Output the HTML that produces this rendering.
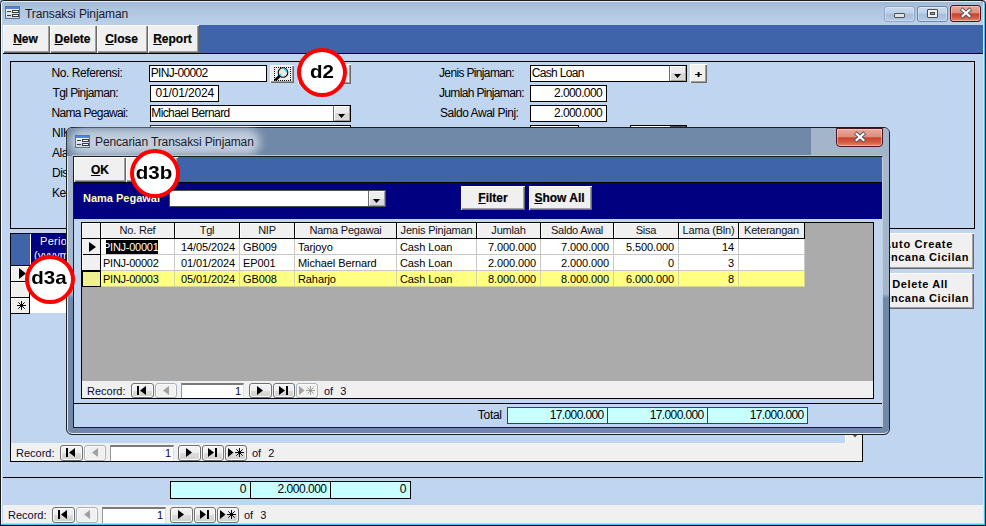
<!DOCTYPE html>
<html><head><meta charset="utf-8"><style>
html,body{margin:0;padding:0;width:986px;height:526px;overflow:hidden;position:relative;font-family:"Liberation Sans",sans-serif;}
body>div{position:absolute;}
.t{white-space:pre;font-family:"Liberation Sans",sans-serif;}
u{text-decoration:underline;}
</style></head><body>
<div style="left:0px;top:0px;width:986px;height:526px;background:#C0D6F0;"></div>
<div style="left:0px;top:0px;width:986px;height:25px;background:linear-gradient(#9DB6D3 0,#AFC6E0 40%,#BAD0E9 100%);border-radius:4px 5px 0 0;"></div>
<div style="left:3px;top:0px;width:980px;height:1px;background:#1c1c1c;"></div>
<div style="left:2px;top:1px;width:979px;height:1px;background:#E4EEF8;"></div>
<div style="left:0px;top:3px;width:1px;height:523px;background:#1c1c1c;"></div>
<svg style="position:absolute;left:0;top:0" width="5" height="5"><rect width="5" height="5" fill="#A3BCD8"/><path d="M0.5 5 V3.5 Q0.5 0.5 3.5 0.5 H5" stroke="#1c1c1c" fill="none"/><path d="M1.5 5 V3.8 Q1.5 1.5 3.8 1.5 H5" stroke="#E4EEF8" fill="none"/></svg>
<div style="left:1px;top:3px;width:1px;height:522px;background:#F4F8FC;"></div>
<div style="left:983px;top:2px;width:1px;height:522px;background:#DCE6F4;"></div>
<div style="left:984px;top:4px;width:1px;height:521px;background:#40C8F0;"></div>
<div style="left:985px;top:4px;width:1px;height:522px;background:#000;"></div>
<div style="left:1px;top:524px;width:984px;height:1px;background:#40C8F0;"></div>
<div style="left:0px;top:525px;width:986px;height:1px;background:#000;"></div>
<svg style="position:absolute;left:980px;top:0" width="6" height="6"><path d="M0 0.5 H2 Q5.5 0.5 5.5 4 V6" stroke="#1c1c1c" fill="none"/></svg>
<svg style="position:absolute;left:5px;top:6px" width="15" height="13" viewBox="0 0 15 13"><defs><linearGradient id="fg" x1="0" y1="0" x2="0" y2="1"><stop offset="0" stop-color="#FFFFFF"/><stop offset="1" stop-color="#C8D4E4"/></linearGradient></defs><rect x="0.5" y="0.5" width="14" height="12" fill="url(#fg)" stroke="#5E7490"/><rect x="1" y="1" width="13" height="2" fill="#4D86E0"/><rect x="2" y="5" width="4" height="1" fill="#404040"/><rect x="2" y="9" width="4" height="1" fill="#404040"/><rect x="7.5" y="4.5" width="6" height="2" fill="#FFFFFF" stroke="#3A3A3A"/><rect x="7.5" y="8.5" width="6" height="2" fill="#FFFFFF" stroke="#3A3A3A"/></svg>
<div class="t" style="left:25px;top:7px;font-size:12px;line-height:14px;color:#1A1A2A;letter-spacing:-0.1px;">Transaksi Pinjaman</div>
<div style="left:884px;top:6px;width:31px;height:16px;border:1px solid #8FA7C4;border-radius:3px;box-sizing:border-box;background:linear-gradient(#CBDBEE 0,#BCD0E8 45%,#A6BEDB 50%,#B4CBE6 100%);box-shadow:inset 0 0 0 1px rgba(255,255,255,0.35);"></div>
<div style="left:894px;top:13px;width:11px;height:5px;background:#E2E2E2;border:1px solid #505050;border-radius:1px;box-sizing:border-box;"></div>
<div style="left:917px;top:6px;width:31px;height:16px;border:1px solid #6F86A6;border-radius:3px;box-sizing:border-box;background:linear-gradient(#CBDBEE 0,#BCD0E8 45%,#A6BEDB 50%,#B4CBE6 100%);box-shadow:inset 0 0 0 1px rgba(255,255,255,0.35);"></div>
<div style="left:927px;top:9px;width:11px;height:9px;background:#F0F0F0;border:1px solid #4A4A4A;border-radius:1px;box-sizing:border-box;"></div>
<div style="left:930px;top:12px;width:5px;height:3px;background:#8FA8C8;border:1px solid #4A4A4A;box-sizing:border-box;"></div>
<div style="left:950px;top:5px;width:31px;height:17px;border:1px solid #4A1422;border-radius:3px;box-sizing:border-box;background:linear-gradient(#EBA89A 0,#DE8E7C 45%,#C9452C 52%,#D2583E 75%,#E08A70 100%);box-shadow:inset 0 0 0 1px rgba(255,220,210,0.5);"></div>
<svg style="position:absolute;left:958.5px;top:7.0px" width="14" height="12" viewBox="0 0 14 12"><path d="M3.6 3 L10.4 9 M10.4 3 L3.6 9" stroke="#505060" stroke-width="3.8" stroke-linecap="square"/><path d="M3.6 3 L10.4 9 M10.4 3 L3.6 9" stroke="#FFFFFF" stroke-width="2.2" stroke-linecap="square"/></svg>
<div style="left:199px;top:25px;width:784px;height:28px;background:#4064AA;"></div>
<div style="left:3px;top:53px;width:980px;height:1px;background:#000;"></div>
<div style="left:3px;top:25px;width:47px;height:28px;background:#F0F0F0;box-shadow: inset 1px 1px 0 #fff, inset -1px -1px 0 #696969, inset -2px -2px 0 #A0A0A0;"></div>
<div class="t" style="left:3px;width:45px;top:32px;text-align:center;font-size:12px;line-height:14px;font-weight:bold;color:#000;-webkit-text-stroke:0.2px #000;"><u>N</u>ew</div>
<div style="left:50px;top:25px;width:47px;height:28px;background:#F0F0F0;box-shadow: inset 1px 1px 0 #fff, inset -1px -1px 0 #696969, inset -2px -2px 0 #A0A0A0;"></div>
<div class="t" style="left:50px;width:45px;top:32px;text-align:center;font-size:12px;line-height:14px;font-weight:bold;color:#000;-webkit-text-stroke:0.2px #000;"><u>D</u>elete</div>
<div style="left:97px;top:25px;width:51px;height:28px;background:#F0F0F0;box-shadow: inset 1px 1px 0 #fff, inset -1px -1px 0 #696969, inset -2px -2px 0 #A0A0A0;"></div>
<div class="t" style="left:97px;width:49px;top:32px;text-align:center;font-size:12px;line-height:14px;font-weight:bold;color:#000;-webkit-text-stroke:0.2px #000;"><u>C</u>lose</div>
<div style="left:148px;top:25px;width:51px;height:28px;background:#F0F0F0;box-shadow: inset 1px 1px 0 #fff, inset -1px -1px 0 #696969, inset -2px -2px 0 #A0A0A0;"></div>
<div class="t" style="left:148px;width:49px;top:32px;text-align:center;font-size:12px;line-height:14px;font-weight:bold;color:#000;-webkit-text-stroke:0.2px #000;"><u>R</u>eport</div>
<div style="left:10px;top:61px;width:965px;height:168px;border:1px solid #000;box-sizing:border-box;"></div>
<div class="t" style="left:51.40px;top:66px;font-size:12px;line-height:14px;color:#000;letter-spacing:-0.408px;">No. Referensi:</div>
<div class="t" style="left:52.56px;top:86px;font-size:12px;line-height:14px;color:#000;letter-spacing:-0.605px;">Tgl Pinjaman:</div>
<div class="t" style="left:51.42px;top:106px;font-size:12px;line-height:14px;color:#000;letter-spacing:-0.653px;">Nama Pegawai:</div>
<div class="t" style="left:52px;top:126px;font-size:12px;line-height:14px;color:#000;letter-spacing:-0.5px;">NIK Pegawai:</div>
<div class="t" style="left:52px;top:146px;font-size:12px;line-height:14px;color:#000;letter-spacing:-0.5px;">Alamat:</div>
<div class="t" style="left:52px;top:166px;font-size:12px;line-height:14px;color:#000;letter-spacing:-0.5px;">Disetujui:</div>
<div class="t" style="left:52px;top:186px;font-size:12px;line-height:14px;color:#000;letter-spacing:-0.5px;">Ke  terangan:</div>
<div class="t" style="left:439.00px;top:66px;font-size:12px;line-height:14px;color:#000;letter-spacing:-0.649px;">Jenis Pinjaman:</div>
<div class="t" style="left:439.00px;top:86px;font-size:12px;line-height:14px;color:#000;letter-spacing:-0.657px;">Jumlah Pinjaman:</div>
<div class="t" style="left:440.00px;top:106px;font-size:12px;line-height:14px;color:#000;letter-spacing:-0.460px;">Saldo Awal Pinj:</div>
<div style="left:149px;top:65px;width:118px;height:17px;background:#fff;border:1px solid #000;box-sizing:border-box;"></div>
<div class="t" style="left:150.70px;top:66px;font-size:12px;line-height:14px;color:#000;letter-spacing:-0.656px;">PINJ-00002</div>
<div style="left:270px;top:65px;width:24px;height:18px;background:#F0F0F0;box-shadow: inset 1px 1px 0 #fff, inset -1px -1px 0 #696969, inset -2px -2px 0 #A0A0A0;"></div>
<div style="left:298px;top:64px;width:53px;height:20px;background:#F0F0F0;box-shadow: inset 1px 1px 0 #fff, inset -1px -1px 0 #696969, inset -2px -2px 0 #A0A0A0;"></div>
<div style="left:150px;top:85px;width:69px;height:17px;background:#fff;border:1px solid #000;box-sizing:border-box;"></div>
<div class="t" style="left:155.40px;top:86px;font-size:12px;line-height:14px;color:#000;letter-spacing:-0.144px;">01/01/2024</div>
<div style="left:150px;top:105px;width:201px;height:17px;background:#fff;border:1px solid #000;box-sizing:border-box;"></div>
<div class="t" style="left:151.26px;top:106px;font-size:12px;line-height:14px;color:#000;letter-spacing:-0.600px;">Michael Bernard</div>
<div style="left:333px;top:106px;width:1px;height:15px;background:#696969;"></div>
<div style="left:334px;top:106px;width:16px;height:15px;box-sizing:border-box;border-left:1px solid #fff;border-top:1px solid #fff;border-right:1px solid #A0A0A0;border-bottom:1px solid #A0A0A0;background:linear-gradient(#EDEDED 0,#EDEDED 50%,#D9D9D9 50%,#D9D9D9 100%);"></div>
<svg style="position:absolute;left:338px;top:114px" width="7" height="4" viewBox="0 0 7 4"><path d="M0 0 H7 L3.5 4 Z" fill="#000"/></svg>
<div style="left:150px;top:125px;width:201px;height:15px;background:#fff;border:1px solid #000;box-sizing:border-box;"></div>
<div style="left:530px;top:65px;width:157px;height:17px;background:#fff;border:1px solid #000;box-sizing:border-box;"></div>
<div class="t" style="left:531.66px;top:66px;font-size:12px;line-height:14px;color:#000;letter-spacing:-0.665px;">Cash Loan</div>
<div style="left:669px;top:66px;width:1px;height:15px;background:#696969;"></div>
<div style="left:670px;top:66px;width:16px;height:15px;box-sizing:border-box;border-left:1px solid #fff;border-top:1px solid #fff;border-right:1px solid #A0A0A0;border-bottom:1px solid #A0A0A0;background:linear-gradient(#EDEDED 0,#EDEDED 50%,#D9D9D9 50%,#D9D9D9 100%);"></div>
<svg style="position:absolute;left:674px;top:74px" width="7" height="4" viewBox="0 0 7 4"><path d="M0 0 H7 L3.5 4 Z" fill="#000"/></svg>
<div style="left:690px;top:64px;width:17px;height:19px;background:#F0F0F0;box-shadow: inset 1px 1px 0 #fff, inset -1px -1px 0 #696969, inset -2px -2px 0 #A0A0A0;"></div>
<svg style="position:absolute;left:694px;top:71px" width="9" height="7" viewBox="0 0 9 7"><rect x="3" y="1" width="1" height="5" fill="#E08A20"/><rect x="5" y="1" width="1" height="5" fill="#2080E0"/><rect x="4" y="1" width="1" height="5" fill="#101010"/><rect x="1" y="3" width="7" height="1" fill="#000"/></svg>
<div style="left:530px;top:85px;width:77px;height:17px;background:#fff;border:1px solid #000;box-sizing:border-box;"></div>
<div class="t" style="right:383.90px;top:86px;text-align:right;font-size:12px;line-height:14px;color:#000;letter-spacing:-0.600px;">2.000.000</div>
<div style="left:530px;top:105px;width:77px;height:17px;background:#fff;border:1px solid #000;box-sizing:border-box;"></div>
<div class="t" style="right:383.90px;top:106px;text-align:right;font-size:12px;line-height:14px;color:#000;letter-spacing:-0.600px;">2.000.000</div>
<div style="left:530px;top:125px;width:49px;height:15px;background:#fff;border:1px solid #000;box-sizing:border-box;"></div>
<div style="left:630px;top:125px;width:57px;height:15px;background:#fff;border:1px solid #000;box-sizing:border-box;"></div>
<div style="left:670px;top:126px;width:16px;height:1px;background:#505050;"></div>
<svg style="position:absolute;left:270px;top:65px" width="24" height="18" viewBox="0 0 24 18"><g fill="#000"><rect x="4" y="2" width="1" height="1"/><rect x="4" y="15" width="1" height="1"/><rect x="6" y="2" width="1" height="1"/><rect x="6" y="15" width="1" height="1"/><rect x="8" y="2" width="1" height="1"/><rect x="8" y="15" width="1" height="1"/><rect x="10" y="2" width="1" height="1"/><rect x="10" y="15" width="1" height="1"/><rect x="12" y="2" width="1" height="1"/><rect x="12" y="15" width="1" height="1"/><rect x="14" y="2" width="1" height="1"/><rect x="14" y="15" width="1" height="1"/><rect x="16" y="2" width="1" height="1"/><rect x="16" y="15" width="1" height="1"/><rect x="18" y="2" width="1" height="1"/><rect x="18" y="15" width="1" height="1"/><rect x="20" y="2" width="1" height="1"/><rect x="20" y="15" width="1" height="1"/><rect x="4" y="4" width="1" height="1"/><rect x="20" y="4" width="1" height="1"/><rect x="4" y="6" width="1" height="1"/><rect x="20" y="6" width="1" height="1"/><rect x="4" y="8" width="1" height="1"/><rect x="20" y="8" width="1" height="1"/><rect x="4" y="10" width="1" height="1"/><rect x="20" y="10" width="1" height="1"/><rect x="4" y="12" width="1" height="1"/><rect x="20" y="12" width="1" height="1"/><rect x="4" y="14" width="1" height="1"/><rect x="20" y="14" width="1" height="1"/></g><circle cx="13" cy="7.5" r="4.8" fill="#EFE6E6" stroke="#000" stroke-width="1.1"/><path d="M13.6 3.9 A3.6 3.6 0 0 1 16.6 7.2" stroke="#00E0F0" stroke-width="1.4" fill="none"/><path d="M9.6 8.6 A3.6 3.6 0 0 0 11.2 10.6" stroke="#00E0F0" stroke-width="1.4" fill="none"/><path d="M9.6 11 L5.2 15.2" stroke="#000" stroke-width="2.6"/></svg>
<div style="left:10px;top:233px;width:853px;height:229px;border:1px solid #000;box-sizing:border-box;"></div>
<div style="left:11px;top:234px;width:19px;height:31px;background:#4064AA;"></div>
<div style="left:30px;top:234px;width:1px;height:31px;background:#fff;"></div>
<div style="left:31px;top:234px;width:831px;height:31px;background:#000080;"></div>
<div class="t" style="left:40px;top:235px;font-size:11px;line-height:13px;color:#fff;letter-spacing:0.3px;">Periode</div>
<div class="t" style="left:34px;top:249px;font-size:11px;line-height:13px;color:#fff;">(yyyymm)</div>
<div style="left:30px;top:265px;width:170px;height:16px;background:#fff;"></div>
<div style="left:10px;top:265px;width:20px;height:17px;background:#F0F0F0;border:1px solid #000;box-sizing:border-box;box-shadow:inset 1px 1px 0 #fff;"></div>
<div style="left:30px;top:281px;width:170px;height:16px;background:#fff;"></div>
<div style="left:10px;top:281px;width:20px;height:17px;background:#F0F0F0;border:1px solid #000;box-sizing:border-box;box-shadow:inset 1px 1px 0 #fff;"></div>
<div style="left:30px;top:297px;width:170px;height:16px;background:#fff;"></div>
<div style="left:10px;top:297px;width:20px;height:17px;background:#F0F0F0;border:1px solid #000;box-sizing:border-box;box-shadow:inset 1px 1px 0 #fff;"></div>
<svg style="position:absolute;left:19px;top:268px" width="7" height="11" viewBox="0 0 7 11"><path d="M0 0 L7 5.5 L0 11 Z" fill="#000"/></svg>
<svg style="position:absolute;left:17px;top:301px" width="9" height="9" viewBox="0 0 9 9"><path d="M4.5 0 V9 M0 4.5 H9 M1.3 1.3 L7.7 7.7 M7.7 1.3 L1.3 7.7" stroke="#000" stroke-width="1"/><circle cx="4.5" cy="4.5" r="1.2"/></svg>
<div style="left:838px;top:233px;width:136px;height:36px;background:#F0F0F0;box-shadow: inset 1px 1px 0 #fff, inset -1px -1px 0 #696969, inset -2px -2px 0 #A0A0A0;"></div>
<div class="t" style="right:33.00px;top:238px;text-align:right;font-size:11px;line-height:13px;font-weight:bold;color:#000;letter-spacing:0.700px;">Auto Create</div>
<div class="t" style="right:17.00px;top:251px;text-align:right;font-size:11px;line-height:13px;font-weight:bold;color:#000;letter-spacing:0.550px;">Rencana Cicilan</div>
<div style="left:838px;top:273px;width:136px;height:36px;background:#F0F0F0;box-shadow: inset 1px 1px 0 #fff, inset -1px -1px 0 #696969, inset -2px -2px 0 #A0A0A0;"></div>
<div class="t" style="right:38.00px;top:278px;text-align:right;font-size:11px;line-height:13px;font-weight:bold;color:#000;letter-spacing:0.600px;">Delete All</div>
<div class="t" style="right:17.00px;top:292px;text-align:right;font-size:11px;line-height:13px;font-weight:bold;color:#000;letter-spacing:0.550px;">Rencana Cicilan</div>
<div style="left:845px;top:434px;width:17px;height:9px;background:#F0F0F0;box-shadow:inset 1px 1px 0 #fff;"></div>
<svg style="position:absolute;left:852px;top:434px" width="6" height="4" viewBox="0 0 6 4"><path d="M0 0 H6 L3 3.5 Z" fill="#505050"/></svg>
<div style="left:11px;top:443px;width:851px;height:18px;background:#F0F0F0;"></div>
<div class="t" style="left:16px;top:447px;font-size:11px;line-height:13px;color:#0A0A30;">Record:</div>
<div style="left:60px;top:445px;width:23px;height:16px;box-sizing:border-box;border:1px solid #707070;border-radius:3px;background:linear-gradient(#F4F4F4 0,#EDEDED 50%,#DCDCDC 52%,#D0D0D0 100%);box-shadow:inset 0 0 0 1px #FCFCFC;"></div>
<svg style="position:absolute;left:66px;top:448px" width="10" height="9" viewBox="0 0 10 9"><rect x="0" y="0" width="2" height="9" fill="#000"/><path d="M9 0 L3 4.5 L9 9 Z" fill="#000"/></svg>
<div style="left:84px;top:445px;width:22px;height:16px;box-sizing:border-box;border:1px solid #A9B1B9;border-radius:3px;background:#F0F0F0;box-shadow:inset 0 0 0 1px #FAFAFA;"></div>
<svg style="position:absolute;left:92px;top:448px" width="6" height="9" viewBox="0 0 6 9"><path d="M6 0 L0 4.5 L6 9 Z" fill="#A0A0A0"/></svg>
<div style="left:110px;top:445px;width:64px;height:16px;background:#fff;border-top:2px solid #7A7A7A;border-left:1px solid #9A9A9A;border-right:1px solid #E0E0E0;box-sizing:border-box;"></div>
<div class="t" style="right:815px;top:447px;text-align:right;font-size:11px;line-height:13px;color:#0A0A30;">1</div>
<div style="left:178px;top:445px;width:23px;height:16px;box-sizing:border-box;border:1px solid #707070;border-radius:3px;background:linear-gradient(#F4F4F4 0,#EDEDED 50%,#DCDCDC 52%,#D0D0D0 100%);box-shadow:inset 0 0 0 1px #FCFCFC;"></div>
<svg style="position:absolute;left:186px;top:448px" width="6" height="9" viewBox="0 0 6 9"><path d="M0 0 L6 4.5 L0 9 Z" fill="#000"/></svg>
<div style="left:202px;top:445px;width:22px;height:16px;box-sizing:border-box;border:1px solid #707070;border-radius:3px;background:linear-gradient(#F4F4F4 0,#EDEDED 50%,#DCDCDC 52%,#D0D0D0 100%);box-shadow:inset 0 0 0 1px #FCFCFC;"></div>
<svg style="position:absolute;left:208px;top:448px" width="10" height="9" viewBox="0 0 10 9"><path d="M0 0 L6 4.5 L0 9 Z" fill="#000"/><rect x="7" y="0" width="2" height="9" fill="#000"/></svg>
<div style="left:225px;top:445px;width:22px;height:16px;box-sizing:border-box;border:1px solid #707070;border-radius:3px;background:linear-gradient(#F4F4F4 0,#EDEDED 50%,#DCDCDC 52%,#D0D0D0 100%);box-shadow:inset 0 0 0 1px #FCFCFC;"></div>
<svg style="position:absolute;left:228px;top:448px" width="17" height="9" viewBox="0 0 17 9"><path d="M0 0 L5.5 4.5 L0 9 Z" fill="#000"/><path d="M11.5 0 V9 M7 4.5 H16 M8.3 1.3 L14.7 7.7 M14.7 1.3 L8.3 7.7" stroke="#000" stroke-width="1"/><circle cx="11.5" cy="4.5" r="1.3" fill="#000"/></svg>
<div class="t" style="left:252px;top:447px;font-size:11px;line-height:13px;color:#0A0A30;word-spacing:0.5px;">of&nbsp; 2</div>
<div style="left:3px;top:477px;width:980px;height:1px;background:#000;"></div>
<div style="left:170px;top:481px;width:81px;height:18px;background:#C8FFFF;border:1px solid #000;box-sizing:border-box;"></div>
<div class="t" style="right:738.25px;top:482px;text-align:right;font-size:12px;line-height:14px;color:#000;letter-spacing:1.300px;">0</div>
<div style="left:250px;top:481px;width:81px;height:18px;background:#C8FFFF;border:1px solid #000;box-sizing:border-box;"></div>
<div class="t" style="right:659.50px;top:482px;text-align:right;font-size:12px;line-height:14px;color:#000;letter-spacing:-0.500px;">2.000.000</div>
<div style="left:330px;top:481px;width:81px;height:18px;background:#C8FFFF;border:1px solid #000;box-sizing:border-box;"></div>
<div class="t" style="right:578.25px;top:482px;text-align:right;font-size:12px;line-height:14px;color:#000;letter-spacing:1.300px;">0</div>
<div style="left:3px;top:505px;width:980px;height:18px;background:#F0F0F0;"></div>
<div class="t" style="left:8px;top:509px;font-size:11px;line-height:13px;color:#0A0A30;">Record:</div>
<div style="left:52px;top:507px;width:23px;height:16px;box-sizing:border-box;border:1px solid #707070;border-radius:3px;background:linear-gradient(#F4F4F4 0,#EDEDED 50%,#DCDCDC 52%,#D0D0D0 100%);box-shadow:inset 0 0 0 1px #FCFCFC;"></div>
<svg style="position:absolute;left:58px;top:510px" width="10" height="9" viewBox="0 0 10 9"><rect x="0" y="0" width="2" height="9" fill="#000"/><path d="M9 0 L3 4.5 L9 9 Z" fill="#000"/></svg>
<div style="left:76px;top:507px;width:22px;height:16px;box-sizing:border-box;border:1px solid #A9B1B9;border-radius:3px;background:#F0F0F0;box-shadow:inset 0 0 0 1px #FAFAFA;"></div>
<svg style="position:absolute;left:84px;top:510px" width="6" height="9" viewBox="0 0 6 9"><path d="M6 0 L0 4.5 L6 9 Z" fill="#A0A0A0"/></svg>
<div style="left:102px;top:507px;width:64px;height:16px;background:#fff;border-top:2px solid #7A7A7A;border-left:1px solid #9A9A9A;border-right:1px solid #E0E0E0;box-sizing:border-box;"></div>
<div class="t" style="right:823px;top:509px;text-align:right;font-size:11px;line-height:13px;color:#0A0A30;">1</div>
<div style="left:170px;top:507px;width:23px;height:16px;box-sizing:border-box;border:1px solid #707070;border-radius:3px;background:linear-gradient(#F4F4F4 0,#EDEDED 50%,#DCDCDC 52%,#D0D0D0 100%);box-shadow:inset 0 0 0 1px #FCFCFC;"></div>
<svg style="position:absolute;left:178px;top:510px" width="6" height="9" viewBox="0 0 6 9"><path d="M0 0 L6 4.5 L0 9 Z" fill="#000"/></svg>
<div style="left:194px;top:507px;width:22px;height:16px;box-sizing:border-box;border:1px solid #707070;border-radius:3px;background:linear-gradient(#F4F4F4 0,#EDEDED 50%,#DCDCDC 52%,#D0D0D0 100%);box-shadow:inset 0 0 0 1px #FCFCFC;"></div>
<svg style="position:absolute;left:200px;top:510px" width="10" height="9" viewBox="0 0 10 9"><path d="M0 0 L6 4.5 L0 9 Z" fill="#000"/><rect x="7" y="0" width="2" height="9" fill="#000"/></svg>
<div style="left:217px;top:507px;width:22px;height:16px;box-sizing:border-box;border:1px solid #707070;border-radius:3px;background:linear-gradient(#F4F4F4 0,#EDEDED 50%,#DCDCDC 52%,#D0D0D0 100%);box-shadow:inset 0 0 0 1px #FCFCFC;"></div>
<svg style="position:absolute;left:220px;top:510px" width="17" height="9" viewBox="0 0 17 9"><path d="M0 0 L5.5 4.5 L0 9 Z" fill="#000"/><path d="M11.5 0 V9 M7 4.5 H16 M8.3 1.3 L14.7 7.7 M14.7 1.3 L8.3 7.7" stroke="#000" stroke-width="1"/><circle cx="11.5" cy="4.5" r="1.3" fill="#000"/></svg>
<div class="t" style="left:244px;top:509px;font-size:11px;line-height:13px;color:#0A0A30;word-spacing:0.5px;">of&nbsp; 3</div>
<div style="left:66px;top:127px;width:824px;height:308px;border:1px solid #1E1E1E;border-radius:6px;box-sizing:border-box;background:linear-gradient(#A8B9CD 0,#A3B5CB 166px,#7189A8 170px,#7189A8 100%);box-shadow: inset 1px 1px 0 #E0E8F0, inset 0 -1px 0 #E0E8F0;"></div>
<div style="left:67px;top:128px;width:822px;height:28px;background:linear-gradient(90deg,#7189A8 0,#7189A8 744px,#A3B5CB 744px);border-radius:5px 5px 0 0;"></div>
<div style="left:70px;top:129px;width:190px;height:26px;border-radius:13px;background:rgba(200,212,226,0.92);filter:blur(4px);"></div>
<div style="left:72px;top:155px;width:811px;height:1px;background:#B8C6D6;"></div>
<svg style="position:absolute;left:75px;top:135px" width="15" height="13" viewBox="0 0 15 13"><defs><linearGradient id="fg" x1="0" y1="0" x2="0" y2="1"><stop offset="0" stop-color="#FFFFFF"/><stop offset="1" stop-color="#C8D4E4"/></linearGradient></defs><rect x="0.5" y="0.5" width="14" height="12" fill="url(#fg)" stroke="#5E7490"/><rect x="1" y="1" width="13" height="2" fill="#4D86E0"/><rect x="2" y="5" width="4" height="1" fill="#404040"/><rect x="2" y="9" width="4" height="1" fill="#404040"/><rect x="7.5" y="4.5" width="6" height="2" fill="#FFFFFF" stroke="#3A3A3A"/><rect x="7.5" y="8.5" width="6" height="2" fill="#FFFFFF" stroke="#3A3A3A"/></svg>
<div class="t" style="left:95px;top:135px;font-size:12px;line-height:14px;color:#1A1A2A;letter-spacing:-0.12px;">Pencarian Transaksi Pinjaman</div>
<div style="left:836px;top:128px;width:47px;height:19px;border:1px solid #4A1422;border-radius:0 0 4px 4px;box-sizing:border-box;background:linear-gradient(#EBA89A 0,#DE8E7C 45%,#C9452C 52%,#D2583E 75%,#E08A70 100%);box-shadow:inset 0 0 0 1px rgba(255,220,210,0.5);"></div>
<svg style="position:absolute;left:852.5px;top:131.0px" width="14" height="12" viewBox="0 0 14 12"><path d="M3.6 3 L10.4 9 M10.4 3 L3.6 9" stroke="#505060" stroke-width="3.8" stroke-linecap="square"/><path d="M3.6 3 L10.4 9 M10.4 3 L3.6 9" stroke="#FFFFFF" stroke-width="2.2" stroke-linecap="square"/></svg>
<div style="left:73px;top:156px;width:810px;height:272px;border:1px solid #1E1E1E;border-right-color:#C4D0DE;box-sizing:border-box;background:#C0D6F0;"></div>
<div style="left:178px;top:157px;width:704px;height:25px;background:#4064AA;"></div>
<div style="left:74px;top:157px;width:52px;height:25px;background:#F0F0F0;box-shadow: inset 1px 1px 0 #fff, inset -1px -1px 0 #696969, inset -2px -2px 0 #A0A0A0;"></div>
<div class="t" style="left:75px;width:50px;top:163px;text-align:center;font-size:12px;line-height:14px;font-weight:bold;-webkit-text-stroke:0.2px #000;"><u>O</u>K</div>
<div style="left:126px;top:157px;width:52px;height:25px;background:#F0F0F0;box-shadow: inset 1px 1px 0 #fff, inset -1px -1px 0 #696969, inset -2px -2px 0 #A0A0A0;"></div>
<div style="left:74px;top:182px;width:808px;height:1px;background:#000;"></div>
<div style="left:74px;top:183px;width:808px;height:36px;background:#000080;"></div>
<div class="t" style="left:83px;top:192px;font-size:11px;line-height:13px;font-weight:bold;color:#FFFFC0;">Nama Pegawai</div>
<div style="left:169px;top:190px;width:217px;height:17px;background:#fff;border:1px solid #505050;box-sizing:border-box;"></div>
<div style="left:368px;top:191px;width:1px;height:15px;background:#696969;"></div>
<div style="left:369px;top:191px;width:16px;height:15px;box-sizing:border-box;border-left:1px solid #fff;border-top:1px solid #fff;border-right:1px solid #A0A0A0;border-bottom:1px solid #A0A0A0;background:linear-gradient(#EDEDED 0,#EDEDED 50%,#D9D9D9 50%,#D9D9D9 100%);"></div>
<svg style="position:absolute;left:373px;top:199px" width="7" height="4" viewBox="0 0 7 4"><path d="M0 0 H7 L3.5 4 Z" fill="#000"/></svg>
<div style="left:461px;top:186px;width:64px;height:24px;background:#F0F0F0;box-shadow: inset 1px 1px 0 #fff, inset -1px -1px 0 #696969, inset -2px -2px 0 #A0A0A0;"></div>
<div class="t" style="left:462px;width:62px;top:191px;text-align:center;font-size:12px;line-height:14px;font-weight:bold;-webkit-text-stroke:0.2px #000;"><u>F</u>ilter</div>
<div style="left:529px;top:186px;width:63px;height:24px;background:#F0F0F0;box-shadow: inset 1px 1px 0 #fff, inset -1px -1px 0 #696969, inset -2px -2px 0 #A0A0A0;"></div>
<div class="t" style="left:529px;width:61px;top:191px;text-align:center;font-size:12px;line-height:14px;font-weight:bold;-webkit-text-stroke:0.2px #000;"><u>S</u>how All</div>
<div style="left:81px;top:222px;width:793px;height:177px;border:1px solid #000;box-sizing:border-box;background:#ABABAB;"></div>
<div style="left:82px;top:223px;width:723px;height:16px;background:#F0F0F0;"></div>
<div style="left:82px;top:223px;width:18px;height:1px;background:#fff;"></div>
<div style="left:82px;top:223px;width:1px;height:15px;background:#fff;"></div>
<div style="left:100px;top:223px;width:1px;height:16px;background:#000;"></div>
<div style="left:101px;top:223px;width:73px;height:1px;background:#fff;"></div>
<div style="left:101px;top:223px;width:1px;height:15px;background:#fff;"></div>
<div style="left:174px;top:223px;width:1px;height:16px;background:#000;"></div>
<div class="t" style="left:101px;width:73px;top:224px;text-align:center;font-size:11px;line-height:13px;color:#101020;letter-spacing:-0.2px;">No. Ref</div>
<div style="left:175px;top:223px;width:64px;height:1px;background:#fff;"></div>
<div style="left:175px;top:223px;width:1px;height:15px;background:#fff;"></div>
<div style="left:239px;top:223px;width:1px;height:16px;background:#000;"></div>
<div class="t" style="left:175px;width:64px;top:224px;text-align:center;font-size:11px;line-height:13px;color:#101020;letter-spacing:-0.2px;">Tgl</div>
<div style="left:240px;top:223px;width:54px;height:1px;background:#fff;"></div>
<div style="left:240px;top:223px;width:1px;height:15px;background:#fff;"></div>
<div style="left:294px;top:223px;width:1px;height:16px;background:#000;"></div>
<div class="t" style="left:240px;width:54px;top:224px;text-align:center;font-size:11px;line-height:13px;color:#101020;letter-spacing:-0.2px;">NIP</div>
<div style="left:295px;top:223px;width:101px;height:1px;background:#fff;"></div>
<div style="left:295px;top:223px;width:1px;height:15px;background:#fff;"></div>
<div style="left:396px;top:223px;width:1px;height:16px;background:#000;"></div>
<div class="t" style="left:295px;width:101px;top:224px;text-align:center;font-size:11px;line-height:13px;color:#101020;letter-spacing:-0.2px;">Nama Pegawai</div>
<div style="left:397px;top:223px;width:79px;height:1px;background:#fff;"></div>
<div style="left:397px;top:223px;width:1px;height:15px;background:#fff;"></div>
<div style="left:476px;top:223px;width:1px;height:16px;background:#000;"></div>
<div class="t" style="left:397px;width:79px;top:224px;text-align:center;font-size:11px;line-height:13px;color:#101020;letter-spacing:-0.2px;">Jenis Pinjaman</div>
<div style="left:477px;top:223px;width:63px;height:1px;background:#fff;"></div>
<div style="left:477px;top:223px;width:1px;height:15px;background:#fff;"></div>
<div style="left:540px;top:223px;width:1px;height:16px;background:#000;"></div>
<div class="t" style="left:477px;width:63px;top:224px;text-align:center;font-size:11px;line-height:13px;color:#101020;letter-spacing:-0.2px;">Jumlah</div>
<div style="left:541px;top:223px;width:72px;height:1px;background:#fff;"></div>
<div style="left:541px;top:223px;width:1px;height:15px;background:#fff;"></div>
<div style="left:613px;top:223px;width:1px;height:16px;background:#000;"></div>
<div class="t" style="left:541px;width:72px;top:224px;text-align:center;font-size:11px;line-height:13px;color:#101020;letter-spacing:-0.2px;">Saldo Awal</div>
<div style="left:614px;top:223px;width:64px;height:1px;background:#fff;"></div>
<div style="left:614px;top:223px;width:1px;height:15px;background:#fff;"></div>
<div style="left:678px;top:223px;width:1px;height:16px;background:#000;"></div>
<div class="t" style="left:614px;width:64px;top:224px;text-align:center;font-size:11px;line-height:13px;color:#101020;letter-spacing:-0.2px;">Sisa</div>
<div style="left:679px;top:223px;width:59px;height:1px;background:#fff;"></div>
<div style="left:679px;top:223px;width:1px;height:15px;background:#fff;"></div>
<div style="left:738px;top:223px;width:1px;height:16px;background:#000;"></div>
<div class="t" style="left:679px;width:59px;top:224px;text-align:center;font-size:11px;line-height:13px;color:#101020;letter-spacing:-0.2px;">Lama (Bln)</div>
<div style="left:739px;top:223px;width:65px;height:1px;background:#fff;"></div>
<div style="left:739px;top:223px;width:1px;height:15px;background:#fff;"></div>
<div style="left:804px;top:223px;width:1px;height:16px;background:#000;"></div>
<div class="t" style="left:739px;width:65px;top:224px;text-align:center;font-size:11px;line-height:13px;color:#101020;letter-spacing:-0.2px;">Keterangan</div>
<div style="left:82px;top:238px;width:723px;height:1px;background:#000;"></div>
<div style="left:82px;top:239px;width:723px;height:16px;background:#fff;"></div>
<div style="left:82px;top:239px;width:19px;height:16px;background:#F0F0F0;box-shadow: inset 1px 0 0 #fff, inset -1px -1px 0 #000;"></div>
<div style="left:174px;top:239px;width:1px;height:16px;background:#C8C8C8;"></div>
<div style="left:101px;top:254px;width:73px;height:1px;background:#C8C8C8;"></div>
<div style="left:106px;top:240px;width:52px;height:14px;background:#000;"></div>
<div class="t" style="left:103px;top:241px;font-size:11px;line-height:13px;color:#000;letter-spacing:-0.1px;color:#fff;letter-spacing:-0.25px;">PINJ-00001</div>
<div style="left:239px;top:239px;width:1px;height:16px;background:#C8C8C8;"></div>
<div style="left:175px;top:254px;width:64px;height:1px;background:#C8C8C8;"></div>
<div class="t" style="right:751px;top:241px;text-align:right;font-size:11px;line-height:13px;color:#000;letter-spacing:-0.1px;">14/05/2024</div>
<div style="left:294px;top:239px;width:1px;height:16px;background:#C8C8C8;"></div>
<div style="left:240px;top:254px;width:54px;height:1px;background:#C8C8C8;"></div>
<div class="t" style="left:243px;top:241px;font-size:11px;line-height:13px;color:#000;letter-spacing:-0.1px;">GB009</div>
<div style="left:396px;top:239px;width:1px;height:16px;background:#C8C8C8;"></div>
<div style="left:295px;top:254px;width:101px;height:1px;background:#C8C8C8;"></div>
<div class="t" style="left:298px;top:241px;font-size:11px;line-height:13px;color:#000;letter-spacing:-0.1px;">Tarjoyo</div>
<div style="left:476px;top:239px;width:1px;height:16px;background:#C8C8C8;"></div>
<div style="left:397px;top:254px;width:79px;height:1px;background:#C8C8C8;"></div>
<div class="t" style="left:400px;top:241px;font-size:11px;line-height:13px;color:#000;letter-spacing:-0.1px;">Cash Loan</div>
<div style="left:540px;top:239px;width:1px;height:16px;background:#C8C8C8;"></div>
<div style="left:477px;top:254px;width:63px;height:1px;background:#C8C8C8;"></div>
<div class="t" style="right:450px;top:241px;text-align:right;font-size:11px;line-height:13px;color:#000;letter-spacing:-0.1px;">7.000.000</div>
<div style="left:613px;top:239px;width:1px;height:16px;background:#C8C8C8;"></div>
<div style="left:541px;top:254px;width:72px;height:1px;background:#C8C8C8;"></div>
<div class="t" style="right:377px;top:241px;text-align:right;font-size:11px;line-height:13px;color:#000;letter-spacing:-0.1px;">7.000.000</div>
<div style="left:678px;top:239px;width:1px;height:16px;background:#C8C8C8;"></div>
<div style="left:614px;top:254px;width:64px;height:1px;background:#C8C8C8;"></div>
<div class="t" style="right:312px;top:241px;text-align:right;font-size:11px;line-height:13px;color:#000;letter-spacing:-0.1px;">5.500.000</div>
<div style="left:738px;top:239px;width:1px;height:16px;background:#C8C8C8;"></div>
<div style="left:679px;top:254px;width:59px;height:1px;background:#C8C8C8;"></div>
<div class="t" style="right:252px;top:241px;text-align:right;font-size:11px;line-height:13px;color:#000;letter-spacing:-0.1px;">14</div>
<div style="left:804px;top:239px;width:1px;height:16px;background:#C8C8C8;"></div>
<div style="left:739px;top:254px;width:65px;height:1px;background:#C8C8C8;"></div>
<div style="left:82px;top:255px;width:723px;height:16px;background:#fff;"></div>
<div style="left:82px;top:255px;width:19px;height:16px;background:#F0F0F0;box-shadow: inset 1px 0 0 #fff, inset -1px -1px 0 #000;"></div>
<div style="left:174px;top:255px;width:1px;height:16px;background:#C8C8C8;"></div>
<div style="left:101px;top:270px;width:73px;height:1px;background:#C8C8C8;"></div>
<div class="t" style="left:103px;top:257px;font-size:11px;line-height:13px;color:#000;letter-spacing:-0.1px;letter-spacing:-0.25px;">PINJ-00002</div>
<div style="left:239px;top:255px;width:1px;height:16px;background:#C8C8C8;"></div>
<div style="left:175px;top:270px;width:64px;height:1px;background:#C8C8C8;"></div>
<div class="t" style="right:751px;top:257px;text-align:right;font-size:11px;line-height:13px;color:#000;letter-spacing:-0.1px;">01/01/2024</div>
<div style="left:294px;top:255px;width:1px;height:16px;background:#C8C8C8;"></div>
<div style="left:240px;top:270px;width:54px;height:1px;background:#C8C8C8;"></div>
<div class="t" style="left:243px;top:257px;font-size:11px;line-height:13px;color:#000;letter-spacing:-0.1px;">EP001</div>
<div style="left:396px;top:255px;width:1px;height:16px;background:#C8C8C8;"></div>
<div style="left:295px;top:270px;width:101px;height:1px;background:#C8C8C8;"></div>
<div class="t" style="left:298px;top:257px;font-size:11px;line-height:13px;color:#000;letter-spacing:-0.1px;">Michael Bernard</div>
<div style="left:476px;top:255px;width:1px;height:16px;background:#C8C8C8;"></div>
<div style="left:397px;top:270px;width:79px;height:1px;background:#C8C8C8;"></div>
<div class="t" style="left:400px;top:257px;font-size:11px;line-height:13px;color:#000;letter-spacing:-0.1px;">Cash Loan</div>
<div style="left:540px;top:255px;width:1px;height:16px;background:#C8C8C8;"></div>
<div style="left:477px;top:270px;width:63px;height:1px;background:#C8C8C8;"></div>
<div class="t" style="right:450px;top:257px;text-align:right;font-size:11px;line-height:13px;color:#000;letter-spacing:-0.1px;">2.000.000</div>
<div style="left:613px;top:255px;width:1px;height:16px;background:#C8C8C8;"></div>
<div style="left:541px;top:270px;width:72px;height:1px;background:#C8C8C8;"></div>
<div class="t" style="right:377px;top:257px;text-align:right;font-size:11px;line-height:13px;color:#000;letter-spacing:-0.1px;">2.000.000</div>
<div style="left:678px;top:255px;width:1px;height:16px;background:#C8C8C8;"></div>
<div style="left:614px;top:270px;width:64px;height:1px;background:#C8C8C8;"></div>
<div class="t" style="right:312px;top:257px;text-align:right;font-size:11px;line-height:13px;color:#000;letter-spacing:-0.1px;">0</div>
<div style="left:738px;top:255px;width:1px;height:16px;background:#C8C8C8;"></div>
<div style="left:679px;top:270px;width:59px;height:1px;background:#C8C8C8;"></div>
<div class="t" style="right:252px;top:257px;text-align:right;font-size:11px;line-height:13px;color:#000;letter-spacing:-0.1px;">3</div>
<div style="left:804px;top:255px;width:1px;height:16px;background:#C8C8C8;"></div>
<div style="left:739px;top:270px;width:65px;height:1px;background:#C8C8C8;"></div>
<div style="left:82px;top:271px;width:723px;height:16px;background:#FFFF80;"></div>
<div style="left:82px;top:271px;width:19px;height:16px;background:#F0F090;box-shadow: inset 0 0 0 1px #000;"></div>
<div style="left:81px;top:270px;width:20px;height:17px;border:1px solid #000;box-sizing:border-box;"></div>
<div style="left:174px;top:271px;width:1px;height:16px;background:#D4D4A0;"></div>
<div style="left:101px;top:286px;width:73px;height:1px;background:#D4D4A0;"></div>
<div class="t" style="left:103px;top:273px;font-size:11px;line-height:13px;color:#000;letter-spacing:-0.1px;letter-spacing:-0.25px;">PINJ-00003</div>
<div style="left:239px;top:271px;width:1px;height:16px;background:#D4D4A0;"></div>
<div style="left:175px;top:286px;width:64px;height:1px;background:#D4D4A0;"></div>
<div class="t" style="right:751px;top:273px;text-align:right;font-size:11px;line-height:13px;color:#000;letter-spacing:-0.1px;">05/01/2024</div>
<div style="left:294px;top:271px;width:1px;height:16px;background:#D4D4A0;"></div>
<div style="left:240px;top:286px;width:54px;height:1px;background:#D4D4A0;"></div>
<div class="t" style="left:243px;top:273px;font-size:11px;line-height:13px;color:#000;letter-spacing:-0.1px;">GB008</div>
<div style="left:396px;top:271px;width:1px;height:16px;background:#D4D4A0;"></div>
<div style="left:295px;top:286px;width:101px;height:1px;background:#D4D4A0;"></div>
<div class="t" style="left:298px;top:273px;font-size:11px;line-height:13px;color:#000;letter-spacing:-0.1px;">Raharjo</div>
<div style="left:476px;top:271px;width:1px;height:16px;background:#D4D4A0;"></div>
<div style="left:397px;top:286px;width:79px;height:1px;background:#D4D4A0;"></div>
<div class="t" style="left:400px;top:273px;font-size:11px;line-height:13px;color:#000;letter-spacing:-0.1px;">Cash Loan</div>
<div style="left:540px;top:271px;width:1px;height:16px;background:#D4D4A0;"></div>
<div style="left:477px;top:286px;width:63px;height:1px;background:#D4D4A0;"></div>
<div class="t" style="right:450px;top:273px;text-align:right;font-size:11px;line-height:13px;color:#000;letter-spacing:-0.1px;">8.000.000</div>
<div style="left:613px;top:271px;width:1px;height:16px;background:#D4D4A0;"></div>
<div style="left:541px;top:286px;width:72px;height:1px;background:#D4D4A0;"></div>
<div class="t" style="right:377px;top:273px;text-align:right;font-size:11px;line-height:13px;color:#000;letter-spacing:-0.1px;">8.000.000</div>
<div style="left:678px;top:271px;width:1px;height:16px;background:#D4D4A0;"></div>
<div style="left:614px;top:286px;width:64px;height:1px;background:#D4D4A0;"></div>
<div class="t" style="right:312px;top:273px;text-align:right;font-size:11px;line-height:13px;color:#000;letter-spacing:-0.1px;">6.000.000</div>
<div style="left:738px;top:271px;width:1px;height:16px;background:#D4D4A0;"></div>
<div style="left:679px;top:286px;width:59px;height:1px;background:#D4D4A0;"></div>
<div class="t" style="right:252px;top:273px;text-align:right;font-size:11px;line-height:13px;color:#000;letter-spacing:-0.1px;">8</div>
<div style="left:804px;top:271px;width:1px;height:16px;background:#D4D4A0;"></div>
<div style="left:739px;top:286px;width:65px;height:1px;background:#D4D4A0;"></div>
<svg style="position:absolute;left:89px;top:242px" width="7" height="10" viewBox="0 0 7 10"><path d="M0 0 L7 5 L0 10 Z" fill="#000"/></svg>
<div style="left:82px;top:381px;width:791px;height:17px;background:#F0F0F0;"></div>
<div class="t" style="left:87px;top:385px;font-size:11px;line-height:13px;color:#0A0A30;">Record:</div>
<div style="left:131px;top:383px;width:23px;height:15px;box-sizing:border-box;border:1px solid #707070;border-radius:3px;background:linear-gradient(#F4F4F4 0,#EDEDED 50%,#DCDCDC 52%,#D0D0D0 100%);box-shadow:inset 0 0 0 1px #FCFCFC;"></div>
<svg style="position:absolute;left:137px;top:386px" width="10" height="9" viewBox="0 0 10 9"><rect x="0" y="0" width="2" height="9" fill="#000"/><path d="M9 0 L3 4.5 L9 9 Z" fill="#000"/></svg>
<div style="left:155px;top:383px;width:22px;height:15px;box-sizing:border-box;border:1px solid #A9B1B9;border-radius:3px;background:#F0F0F0;box-shadow:inset 0 0 0 1px #FAFAFA;"></div>
<svg style="position:absolute;left:163px;top:386px" width="6" height="9" viewBox="0 0 6 9"><path d="M6 0 L0 4.5 L6 9 Z" fill="#A0A0A0"/></svg>
<div style="left:181px;top:383px;width:63px;height:15px;background:#fff;border-top:2px solid #7A7A7A;border-left:1px solid #9A9A9A;border-right:1px solid #E0E0E0;box-sizing:border-box;"></div>
<div class="t" style="right:745px;top:385px;text-align:right;font-size:11px;line-height:13px;color:#0A0A30;">1</div>
<div style="left:249px;top:383px;width:23px;height:15px;box-sizing:border-box;border:1px solid #707070;border-radius:3px;background:linear-gradient(#F4F4F4 0,#EDEDED 50%,#DCDCDC 52%,#D0D0D0 100%);box-shadow:inset 0 0 0 1px #FCFCFC;"></div>
<svg style="position:absolute;left:257px;top:386px" width="6" height="9" viewBox="0 0 6 9"><path d="M0 0 L6 4.5 L0 9 Z" fill="#000"/></svg>
<div style="left:273px;top:383px;width:22px;height:15px;box-sizing:border-box;border:1px solid #707070;border-radius:3px;background:linear-gradient(#F4F4F4 0,#EDEDED 50%,#DCDCDC 52%,#D0D0D0 100%);box-shadow:inset 0 0 0 1px #FCFCFC;"></div>
<svg style="position:absolute;left:279px;top:386px" width="10" height="9" viewBox="0 0 10 9"><path d="M0 0 L6 4.5 L0 9 Z" fill="#000"/><rect x="7" y="0" width="2" height="9" fill="#000"/></svg>
<div style="left:296px;top:383px;width:22px;height:15px;box-sizing:border-box;border:1px solid #A9B1B9;border-radius:3px;background:#F0F0F0;box-shadow:inset 0 0 0 1px #FAFAFA;"></div>
<svg style="position:absolute;left:299px;top:386px" width="17" height="9" viewBox="0 0 17 9"><path d="M0 0 L5.5 4.5 L0 9 Z" fill="#A0A0A0"/><path d="M11.5 0 V9 M7 4.5 H16 M8.3 1.3 L14.7 7.7 M14.7 1.3 L8.3 7.7" stroke="#A0A0A0" stroke-width="1"/><circle cx="11.5" cy="4.5" r="1.3" fill="#A0A0A0"/></svg>
<div class="t" style="left:324px;top:385px;font-size:11px;line-height:13px;color:#0A0A30;word-spacing:0.5px;">of&nbsp; 3</div>
<div style="left:74px;top:403px;width:808px;height:1px;background:#000;"></div>
<div class="t" style="left:477.78px;top:408px;font-size:12px;line-height:14px;color:#000;letter-spacing:-0.280px;">Total</div>
<div style="left:507px;top:407px;width:101px;height:17px;background:#C8FFFF;border:1px solid #404040;box-sizing:border-box;"></div>
<div class="t" style="right:382.39px;top:408px;text-align:right;font-size:12px;line-height:14px;color:#000;letter-spacing:-0.611px;">17.000.000</div>
<div style="left:607px;top:407px;width:101px;height:17px;background:#C8FFFF;border:1px solid #404040;box-sizing:border-box;"></div>
<div class="t" style="right:282.39px;top:408px;text-align:right;font-size:12px;line-height:14px;color:#000;letter-spacing:-0.611px;">17.000.000</div>
<div style="left:707px;top:407px;width:101px;height:17px;background:#C8FFFF;border:1px solid #404040;box-sizing:border-box;"></div>
<div class="t" style="right:182.39px;top:408px;text-align:right;font-size:12px;line-height:14px;color:#000;letter-spacing:-0.611px;">17.000.000</div>
<div style="left:297px;top:48px;width:50px;height:49px;border-radius:50%;border:4px solid #F00;background:#fff;box-sizing:border-box;"></div>
<div class="t" style="left:282px;width:80px;top:62px;text-align:center;font-size:19px;line-height:20px;font-weight:bold;color:#000;transform:scaleX(1.08);">d2</div>
<div style="left:130px;top:149px;width:50px;height:49px;border-radius:50%;border:4px solid #F00;background:#fff;box-sizing:border-box;"></div>
<div class="t" style="left:114px;width:80px;top:163px;text-align:center;font-size:19px;line-height:20px;font-weight:bold;color:#000;transform:scaleX(1.08);">d3b</div>
<div style="left:25px;top:255px;width:50px;height:49px;border-radius:50%;border:4px solid #F00;background:#fff;box-sizing:border-box;"></div>
<div class="t" style="left:9px;width:80px;top:268px;text-align:center;font-size:19px;line-height:20px;font-weight:bold;color:#000;transform:scaleX(1.08);">d3a</div>
</body></html>
